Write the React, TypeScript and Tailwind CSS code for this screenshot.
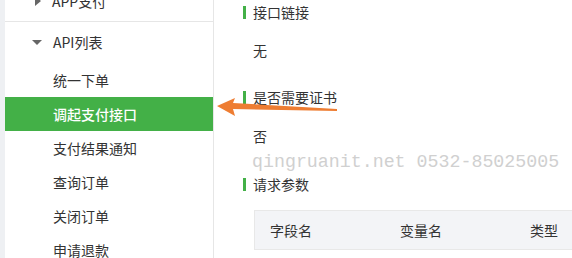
import React from "react";

const font = { fontFamily: '"Noto Sans CJK SC", "Noto Sans", sans-serif' };

const menuItems = ["统一下单", "调起支付接口", "支付结果通知", "查询订单", "关闭订单", "申请退款"];

function SectionTitle({ text, className = "" }: { text: string; className?: string }) {
    return (
        <div className={`flex h-[20px] items-center ${className}`}>
            <span className="h-[13px] w-[3px] bg-[#43b047]" />
            <span className="ml-[7px] text-[14px] text-[#333]">{text}</span>
        </div>
    );
}

export default function App() {
    return (
        <div className="relative flex h-[258px] w-[572px] overflow-hidden bg-white" style={font}>
            {/* left strip */}
            <div className="w-[5px] shrink-0 bg-[#eef0f3]" />

            {/* SIDEBAR */}
            <div className="w-[209px] shrink-0 border-r border-[#e6e6e6] bg-white">
                <div className="flex h-[22px] items-end border-b border-[#e6e6e6]">
                    <div className="relative -mb-[10px] flex h-[40px] items-center pb-[20px] text-[14px] text-[#333]">
                        <span className="ml-[30px] h-0 w-0 border-y-[5px] border-l-[6px] border-y-transparent border-l-[#666]" />
                        <span className="ml-[11px]">APP支付</span>
                    </div>
                </div>
                <div className="flex h-[41px] items-center text-[14px] text-[#333]">
                    <span className="ml-[27px] h-0 w-0 border-x-[5px] border-t-[5px] border-x-transparent border-t-[#666]" />
                    <span className="ml-[11px]">API列表</span>
                </div>
                {menuItems.map((item, i) => (
                    <div
                        key={item}
                        className={`flex h-[34px] items-center pl-[48px] text-[14px] ${i === 1 ? "bg-[#43b047] font-medium text-white" : "text-[#333]"}`}
                    >
                        {item}
                    </div>
                ))}
            </div>

            {/* CONTENT */}
            <div className="flex-1 pl-[29px]">
                <SectionTitle text="接口链接" className="mt-[2px]" />
                <div className="mt-[18px] ml-[10px] h-[20px] text-[14px] leading-[20px] text-[#333]">无</div>
                <SectionTitle text="是否需要证书" className="mt-[27px]" />
                <div className="mt-[19px] ml-[10px] h-[20px] text-[14px] leading-[20px] text-[#333]">否</div>
                <div
                    className="mt-[4px] ml-[9px] whitespace-nowrap text-[18.3px] leading-[24px] text-[#d0d0d0]"
                    style={{ fontFamily: '"Liberation Mono", monospace' }}
                >
                    qingruanit.net 0532-85025005
                </div>
                <SectionTitle text="请求参数" className="mt-0" />

                {/* TABLE */}
                <div className="mt-[16px] ml-[11px] w-[420px] border-l border-t border-[#e8e8e8]">
                    <div className="flex h-[39px] items-center border-b border-[#e8e8e8] bg-[#f3f4f7] text-[14px] text-[#333]">
                        <div className="w-[130px] pl-[15px]">字段名</div>
                        <div className="w-[130px] pl-[15px]">变量名</div>
                        <div className="w-[130px] pl-[15px]">类型</div>
                    </div>
                </div>
            </div>

            {/* arrow overlay */}
            <svg className="absolute left-0 top-0" width="572" height="258" viewBox="0 0 572 258">
                <polygon
                    points="217,106 235,98 233,103 337,109 337,111 233,109 235,116"
                    fill="#ee7d32"
                />
            </svg>
        </div>
    );
}
